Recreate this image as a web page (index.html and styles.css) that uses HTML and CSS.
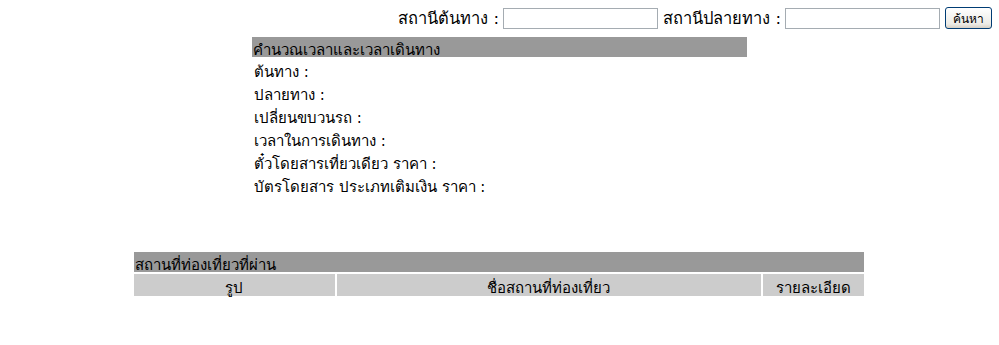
FILE: index.html
```html
<!DOCTYPE html>
<html lang="th">
<head>
    <meta charset="UTF-8">
    <title>ค้นหาเส้นทาง</title>
    <link rel="stylesheet" href="styles.css">
</head>
<body>

    <!-- ค้นหา -->
    <div class="search-bar">
        <label>สถานีต้นทาง :</label>
        <input type="text" class="station-input">
        <label>สถานีปลายทาง :</label>
        <input type="text" class="station-input">
        <button class="search-btn">ค้นหา</button>
    </div>

    <!-- ผลการคำนวณ -->
    <div class="result">
        <div class="result-title">คำนวณเวลาและเวลาเดินทาง</div>
        <div class="result-line">ต้นทาง :</div>
        <div class="result-line">ปลายทาง :</div>
        <div class="result-line">เปลี่ยนขบวนรถ :</div>
        <div class="result-line">เวลาในการเดินทาง :</div>
        <div class="result-line">ตั๋วโดยสารเที่ยวเดียว ราคา :</div>
        <div class="result-line">บัตรโดยสาร ประเภทเติมเงิน ราคา :</div>
    </div>

    <!-- สถานที่ท่องเที่ยว -->
    <table class="places">
        <tr>
            <td colspan="3" class="places-title">สถานที่ท่องเที่ยวที่ผ่าน</td>
        </tr>
        <tr class="places-head">
            <td class="col-pic">รูป</td>
            <td class="col-name">ชื่อสถานที่ท่องเที่ยว</td>
            <td class="col-detail">รายละเอียด</td>
        </tr>
    </table>

</body>
</html>
```

FILE: styles.css
```css
body {
    font-family: Tahoma, "DejaVu Sans", sans-serif;
    font-size: 15px;
    color: #000;
    margin: 0;
    padding: 0;
}

/* แถบค้นหา */
.search-bar {
    display: flex;
    justify-content: flex-end;
    align-items: center;
    gap: 4px;
    padding: 7px 7px 0 0;
    height: 22px;
    font-size: 16.5px;
}
.search-bar label {
    margin-left: 1px;
}
.station-input {
    width: 149px;
    height: 17px;
    border: 1px solid #a5acb2;
    padding: 1px 2px;
    margin: 0;
    font-size: 13px;
}
.search-btn {
    width: 47px;
    height: 22px;
    margin-left: 1px;
    border: 1px solid #003c74;
    border-radius: 3px;
    background: linear-gradient(to bottom, #ffffff, #ecebe6 80%, #d6d0c5);
    font-family: Tahoma, "DejaVu Sans", sans-serif;
    font-size: 12px;
    padding: 0;
}

/* ผลการคำนวณ */
.result {
    width: 495px;
    margin: 8px auto 0;
}
.result-title {
    background-color: #999999;
    height: 20px;
    line-height: 26px;
    padding-left: 1px;
}
.result-line {
    height: 23px;
    line-height: 30px;
    padding-left: 2px;
}

/* ตารางสถานที่ */
.places {
    width: 734px;
    margin: 55px auto 0;
    border-spacing: 2px;
    position: relative;
    left: -1px;
}
.places td {
    padding: 0;
}
.places-title {
    background-color: #999999;
    height: 14px;
    line-height: 14px;
    padding: 6px 0 0 1px !important;
}
.places-head td {
    background-color: #cccccc;
    text-align: center;
    height: 15px;
    line-height: 15px;
    padding-top: 7px;
}
.col-pic {
    width: 201px;
}
.col-detail {
    width: 101px;
}
```
